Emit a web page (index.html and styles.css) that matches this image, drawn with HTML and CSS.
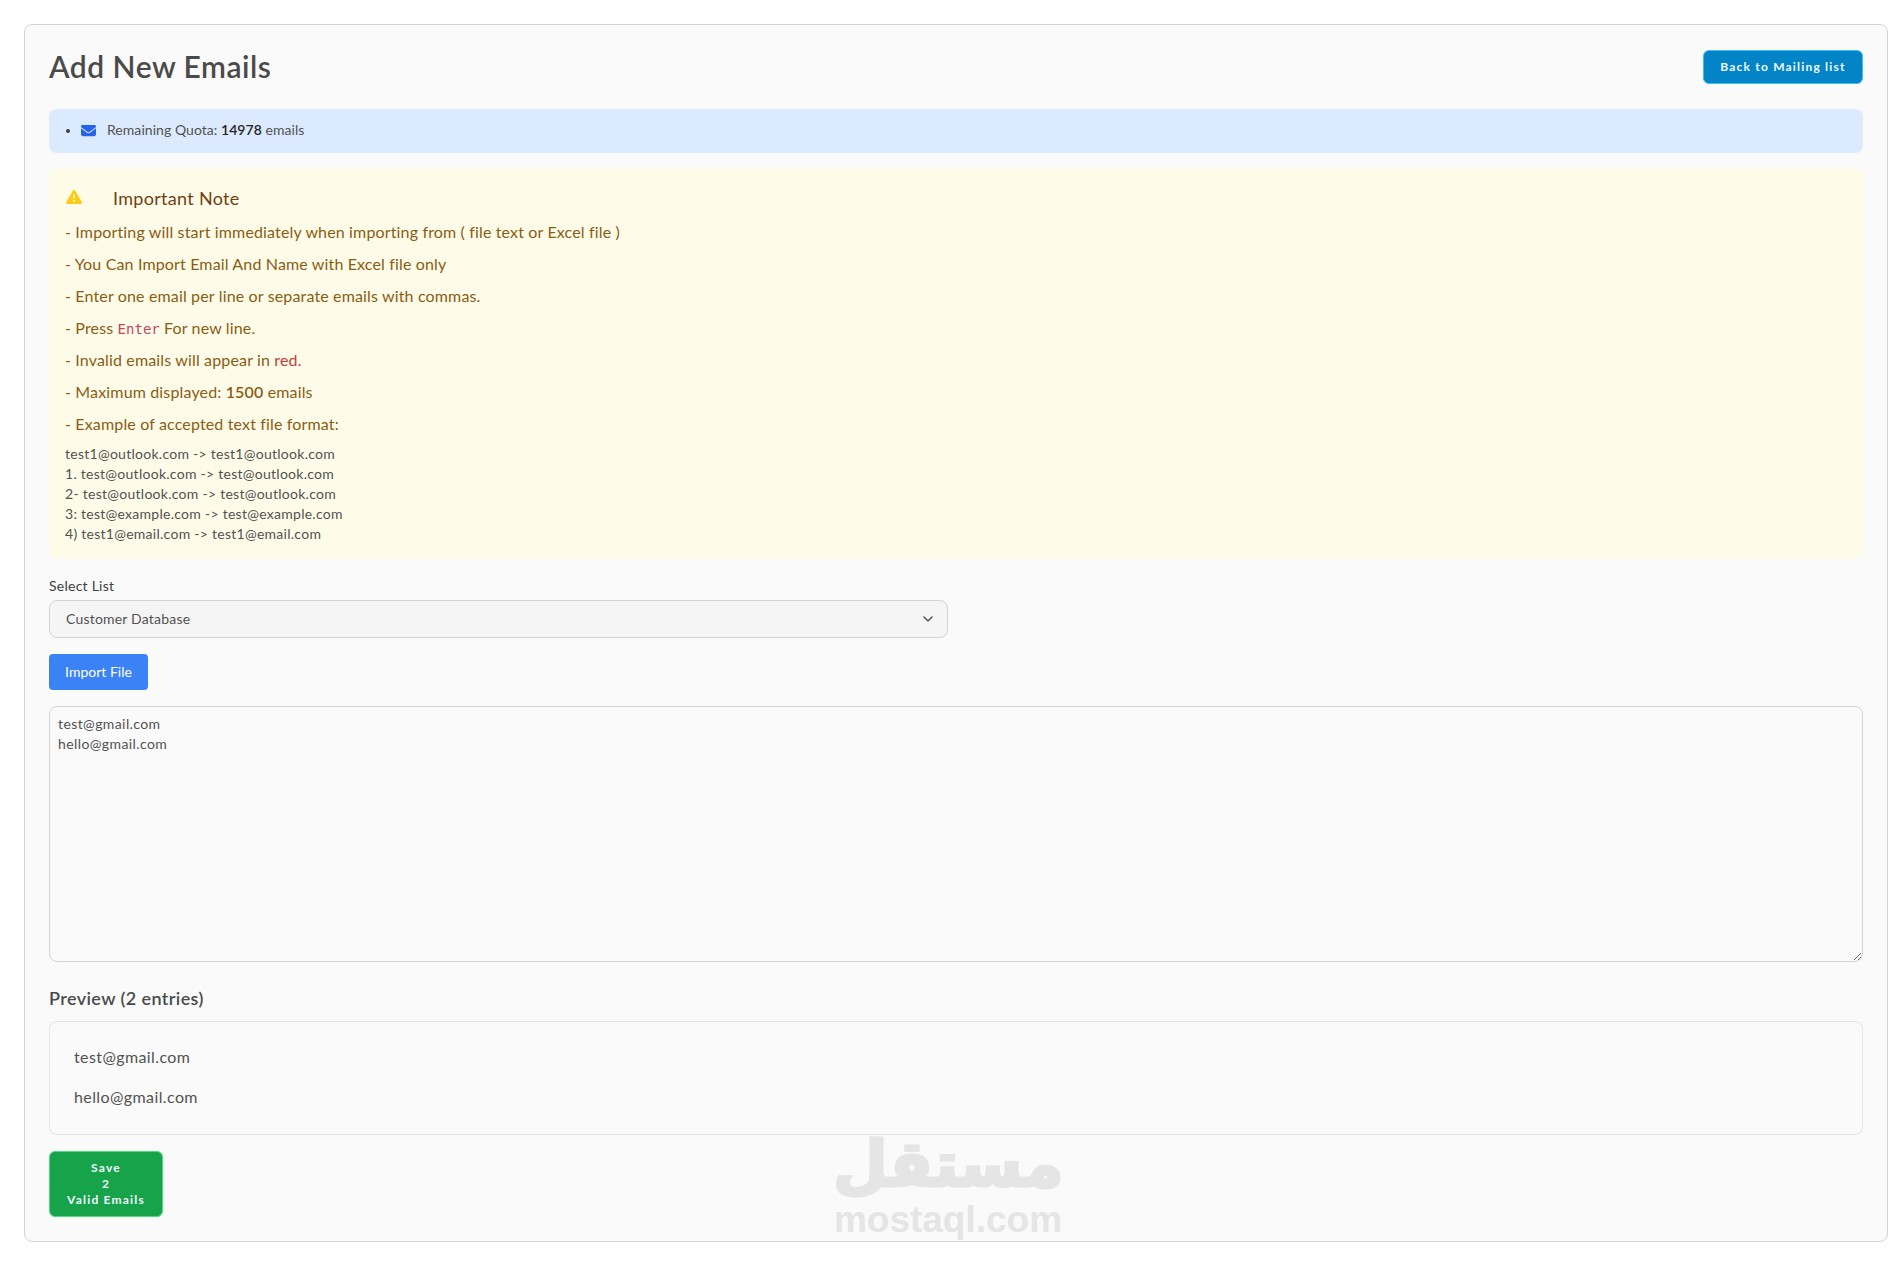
FILE: index.html
```html
<!DOCTYPE html>
<html lang="en">
<head>
<meta charset="utf-8">
<title>Add New Emails</title>
<link rel="stylesheet" href="styles.css">
</head>
<body>
<main class="card">
  <header class="header">
    <h1 class="title">Add New Emails</h1>
    <a class="btn btn-back" href="#">Back to Mailing list</a>
  </header>

  <section class="quota">
    <span class="bullet"></span>
    <svg class="quota-icon" viewBox="0 0 512 512" aria-hidden="true"><path fill="currentColor" d="M48 64C21.500 64 0 85.500 0 112c0 15.100 7.100 29.300 19.200 38.400L236.800 313.600c11.400 8.500 27 8.500 38.400 0L492.800 150.400c12.100-9.100 19.200-23.300 19.200-38.400 0-26.500-21.500-48-48-48H48zM0 176V384c0 35.300 28.700 64 64 64H448c35.300 0 64-28.700 64-64V176L294.400 339.200c-22.800 17.100-54 17.100-76.800 0L0 176z"/></svg>
    <span class="quota-text">Remaining Quota: <strong>14978</strong> emails</span>
  </section>

  <section class="note">
    <h2 class="note-title">
      <svg class="note-icon" viewBox="0 0 512 512" aria-hidden="true"><path fill="currentColor" d="M256 32c14.200 0 27.300 7.500 34.500 19.800l216 368c7.300 12.400 7.300 27.700.2 40.100S486.300 480 472 480H40c-14.300 0-27.600-7.700-34.700-20.100s-7-27.800.2-40.100l216-368C228.700 39.500 241.800 32 256 32zm0 128c-13.300 0-24 10.700-24 24V296c0 13.300 10.700 24 24 24s24-10.700 24-24V184c0-13.300-10.700-24-24-24zm32 224a32 32 0 1 0-64 0 32 32 0 1 0 64 0z"/></svg>
      Important Note
    </h2>
    <p class="note-line">- Importing will start immediately when importing from ( file text or Excel file )</p>
    <p class="note-line">- You Can Import Email And Name with Excel file only</p>
    <p class="note-line">- Enter one email per line or separate emails with commas.</p>
    <p class="note-line">- Press <code class="key">Enter</code> For new line.</p>
    <p class="note-line">- Invalid emails will appear in <span class="red">red.</span></p>
    <p class="note-line">- Maximum displayed: <strong>1500</strong> emails</p>
    <p class="note-line">- Example of accepted text file format:</p>
    <div class="examples">
      <div>test1@outlook.com -&gt; test1@outlook.com</div>
      <div>1. test@outlook.com -&gt; test@outlook.com</div>
      <div>2- test@outlook.com -&gt; test@outlook.com</div>
      <div>3: test@example.com -&gt; test@example.com</div>
      <div>4) test1@email.com -&gt; test1@email.com</div>
    </div>
  </section>

  <label class="field-label" for="list">Select List</label>
  <div class="select-wrap">
    <select class="select" id="list"><option>Customer Database</option></select>
    <svg class="chevron" viewBox="0 0 20 20" aria-hidden="true"><path d="M5 7.500 10 12.500l5-5" fill="none" stroke="currentColor" stroke-width="1.800" stroke-linecap="round" stroke-linejoin="round"/></svg>
  </div>

  <button class="btn-import" type="button">Import File</button>

  <textarea class="emails">test@gmail.com
hello@gmail.com</textarea>

  <h3 class="preview-title">Preview (2 entries)</h3>
  <ul class="preview">
    <li>test@gmail.com</li>
    <li>hello@gmail.com</li>
  </ul>

  <button class="btn btn-save" type="button"><span>Save</span><span>2</span><span>Valid Emails</span></button>

  <div class="watermark" aria-hidden="true">
    <div class="wm-ar">مستقل</div>
    <div class="wm-en">mostaql.com</div>
  </div>
</main>
</body>
</html>
```

FILE: styles.css
```css
* { box-sizing: border-box; }
html, body { margin: 0; }
body {
  padding: 24px 9px 20px 24px;
  background: #fff;
  font-family: "Lato", "Noto Sans", sans-serif;
  color: #404040;
  font-size: 14px;
  line-height: 20px;
}
.card {
  position: relative;
  display: flex;
  flex-direction: column;
  align-items: flex-start;
  height: 1218px;
  padding: 24px;
  background: #fafafa;
  border: 1px solid #d4d4d4;
  border-radius: 8px;
}
.header {
  display: flex;
  width: 100%;
  height: 36px;
  justify-content: space-between;
  align-items: center;
  margin-bottom: 24px;
}
.title {
  margin: 0;
  padding-bottom: 2px;
  font-size: 30px;
  line-height: 34px;
  font-weight: 600;
  letter-spacing: 0.5px;
  color: #4a4a4a;
}
.btn {
  display: inline-block;
  color: #f0f9ff;
  font-size: 12px;
  line-height: 16px;
  font-weight: 700;
  letter-spacing: 0.1em;
  text-decoration: none;
  border-radius: 6px;
}
.btn-back {
  width: 160px;
  padding: 8px 0;
  text-align: center;
  background: #0284c7;
  border: 1px solid #38bdf8;
}
.quota {
  display: flex;
  align-items: center;
  width: 100%;
  height: 44px;
  padding: 0 16px;
  margin-bottom: 15px;
  background: #dbeafe;
  border-radius: 8px;
}
.bullet {
  width: 4px;
  height: 4px;
  margin: 0 11px 0 1px;
  border-radius: 50%;
  background: #404040;
}
.quota-icon {
  width: 15px;
  height: 15px;
  margin: -1px 11px 0 0;
  color: #2563eb;
}
.quota-text {
  padding-bottom: 2px;
  letter-spacing: 0.05px;
  color: #525252;
}
.quota strong { font-weight: 600; color: #262626; }
.note {
  width: 100%;
  height: 391px;
  padding: 16px;
  background: #fefce8;
  border-radius: 8px;
  color: #8a5c14;
  font-size: 16px;
  line-height: 24px;
  letter-spacing: 0.15px;
}
.note-title {
  display: flex;
  align-items: center;
  margin: 0;
  font-size: 18px;
  line-height: 28px;
  font-weight: 400;
  letter-spacing: 0.3px;
  color: #713f12;
}
.note-icon {
  width: 16px;
  height: 16px;
  margin: -2px 31px 0 1px;
  color: #facc15;
}
.note-line { margin: 8px 0 0; }
.note-line strong { font-weight: 600; }
.key {
  font-family: "DejaVu Sans Mono", "Liberation Mono", monospace;
  font-size: 14px;
  line-height: 1;
  letter-spacing: 0;
  color: #c0455d;
}
.red { color: #c53b3b; }
.examples {
  margin-top: 8px;
  font-size: 14px;
  line-height: 20px;
  letter-spacing: 0.27px;
  color: #525252;
}
.field-label { margin: 17px 0 4px; letter-spacing: 0.25px; color: #404040; }
.select-wrap { position: relative; width: 899px; height: 38px; margin-bottom: 16px; }
.select {
  appearance: none;
  display: block;
  width: 100%;
  height: 38px;
  padding: 0 16px;
  font: inherit;
  letter-spacing: 0.2px;
  color: #525252;
  background: #f5f5f5;
  border: 1px solid #d4d4d4;
  border-radius: 8px;
}
.chevron {
  position: absolute;
  top: 11px;
  right: 12px;
  width: 16px;
  height: 16px;
  color: #525252;
}
.btn-import {
  height: 36px;
  width: 99px;
  padding: 0;
  margin-bottom: 16px;
  font: inherit;
  color: #fff;
  background: #3b82f6;
  border: 0;
  border-radius: 4px;
}
.emails {
  display: block;
  width: 100%;
  height: 256px;
  padding: 7px 8px 8px;
  font: inherit;
  letter-spacing: 0.4px;
  color: #525252;
  background: #fafafa;
  border: 1px solid #d4d4d4;
  border-radius: 8px;
  resize: vertical;
  outline: none;
}
.preview-title {
  margin: 22px 0 9px;
  font-size: 18px;
  line-height: 28px;
  font-weight: 600;
  letter-spacing: 0.4px;
  color: #4a4a4a;
}
.preview {
  width: 100%;
  margin: 0 0 16px;
  padding: 16px;
  list-style: none;
  border: 1px solid #e5e5e5;
  border-radius: 8px;
  font-size: 16px;
  line-height: 24px;
  letter-spacing: 0.4px;
  color: #525252;
}
.preview li { padding: 7px 8px 9px; }
.btn-save {
  display: flex;
  flex-direction: column;
  align-items: center;
  width: 114px;
  padding: 8px 0;
  font-family: inherit;
  background: #16a34a;
  border: 1px solid #4ade80;
}
.watermark {
  position: absolute;
  left: 808px;
  bottom: 4px;
  width: 230px;
  text-align: center;
  color: #e5e5e5;
  font-weight: 700;
  pointer-events: none;
}
.wm-ar {
  margin-bottom: 5px;
  font-family: "DejaVu Sans", sans-serif;
  font-size: 63px;
  line-height: 66px;
  -webkit-text-stroke: 3px #e5e5e5;
}
.wm-en {
  font-family: "Liberation Sans", sans-serif;
  font-size: 37px;
  line-height: 34px;
}
```
